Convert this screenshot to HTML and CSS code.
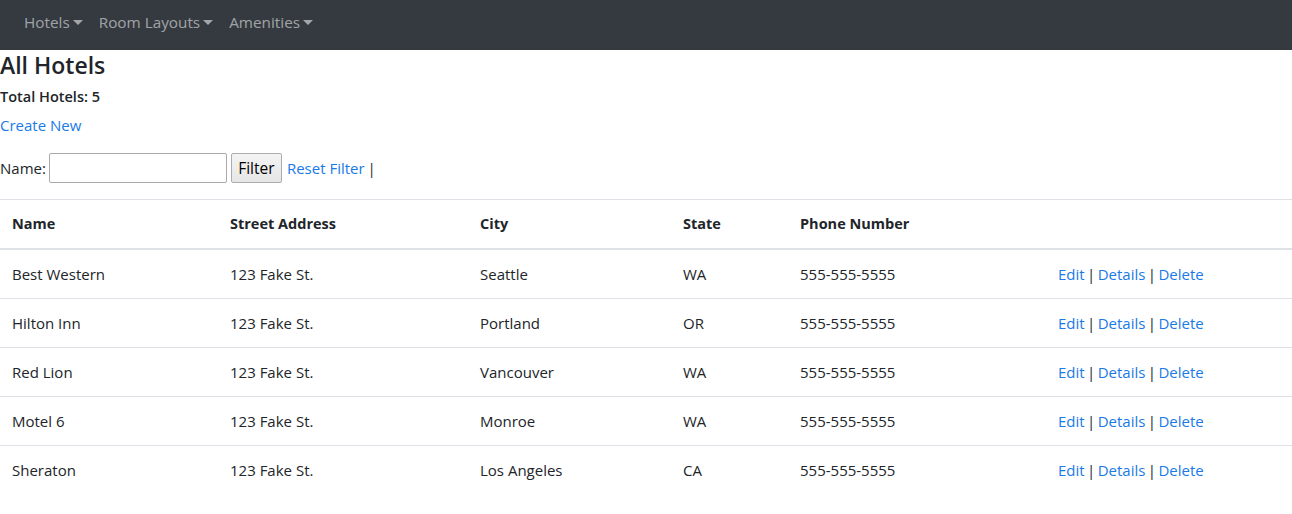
FILE: index.html
```html
<!DOCTYPE html>
<html lang="en">
<head>
<meta charset="utf-8">
<title>All Hotels</title>
<link rel="stylesheet" href="styles.css">
</head>
<body>
<nav class="navbar">
  <ul class="nav">
    <li class="nav-item"><a class="nav-link dropdown-toggle" href="#">Hotels</a></li>
    <li class="nav-item"><a class="nav-link dropdown-toggle" href="#">Room Layouts</a></li>
    <li class="nav-item"><a class="nav-link dropdown-toggle" href="#">Amenities</a></li>
  </ul>
</nav>
<main class="content">
  <h4 class="title">All Hotels</h4>
  <p class="total"><strong>Total Hotels: 5</strong></p>
  <p class="create"><a href="#">Create New</a></p>
  <form class="filter">
    <label class="filter-label">Name:</label>
    <input class="filter-input" type="text">
    <button class="filter-btn" type="button">Filter</button>
    <a href="#" class="reset">Reset Filter</a><span class="sep">|</span>
  </form>
  <table class="table">
    <thead>
      <tr>
        <th class="c-name">Name</th>
        <th class="c-street">Street Address</th>
        <th class="c-city">City</th>
        <th class="c-state">State</th>
        <th class="c-phone">Phone Number</th>
        <th class="c-actions"></th>
      </tr>
    </thead>
    <tbody>
      <tr><td>Best Western</td><td>123 Fake St.</td><td>Seattle</td><td>WA</td><td>555-555-5555</td><td class="actions"><a href="#">Edit</a> | <a href="#">Details</a> | <a href="#">Delete</a></td></tr>
      <tr><td>Hilton Inn</td><td>123 Fake St.</td><td>Portland</td><td>OR</td><td>555-555-5555</td><td class="actions"><a href="#">Edit</a> | <a href="#">Details</a> | <a href="#">Delete</a></td></tr>
      <tr><td>Red Lion</td><td>123 Fake St.</td><td>Vancouver</td><td>WA</td><td>555-555-5555</td><td class="actions"><a href="#">Edit</a> | <a href="#">Details</a> | <a href="#">Delete</a></td></tr>
      <tr><td>Motel 6</td><td>123 Fake St.</td><td>Monroe</td><td>WA</td><td>555-555-5555</td><td class="actions"><a href="#">Edit</a> | <a href="#">Details</a> | <a href="#">Delete</a></td></tr>
      <tr><td>Sheraton</td><td>123 Fake St.</td><td>Los Angeles</td><td>CA</td><td>555-555-5555</td><td class="actions"><a href="#">Edit</a> | <a href="#">Details</a> | <a href="#">Delete</a></td></tr>
    </tbody>
  </table>
</main>
</body>
</html>
```

FILE: styles.css
```css
* { box-sizing: border-box; }
html, body { margin: 0; padding: 0; }
body {
  font-family: "Open Sans", "Noto Sans", "Liberation Sans", sans-serif;
  font-size: 15px;
  line-height: 24px;
  color: #212529;
  background: #fff;
}
a { color: #1a7ae6; text-decoration: none; }

.navbar {
  background: #343a40;
  height: 50px;
  display: flex;
  align-items: center;
  padding: 0 16px 6px;
}
.nav { list-style: none; margin: 0; padding: 0; display: flex; }
.nav-link {
  display: block;
  padding: 0 8px;
  color: rgba(255,255,255,.55);
  font-size: 15.3px;
  line-height: 24px;
}
.dropdown-toggle::after {
  content: "";
  display: inline-block;
  margin-left: 3px;
  vertical-align: 3px;
  border-top: 5px solid;
  border-right: 5px solid transparent;
  border-left: 5px solid transparent;
}

.content { padding: 0; }
.title {
  margin: 0;
  padding-top: 1px;
  font-size: 23px;
  font-weight: 600;
  line-height: 28px;
}
.total { margin: 6px 0 0; font-size: 14.5px; line-height: 24px; }
.total strong { font-weight: 600; }
.create { margin: 4px 0 0; }
.filter {
  display: flex;
  align-items: center;
  margin-top: 16px;
  height: 30px;
}
.filter-label { margin-right: 3px; }
.filter-input {
  width: 178px;
  height: 30px;
  border: 1px solid #a9a9a9;
  border-radius: 2px;
  margin: 0 4px 0 0;
  padding: 1px 2px;
  font: inherit;
}
.filter-btn {
  height: 30px;
  width: 51px;
  padding: 0;
  margin-right: 5px;
  border: 1px solid #adadad;
  border-radius: 2px;
  background: linear-gradient(#f4f4f4, #e6e6e6);
  font: inherit;
  font-size: 15.5px;
  color: #000;
}
.sep { margin-left: 3px; }

.table {
  width: 100%;
  border-collapse: collapse;
  margin-top: 16px;
}
.table th, .table td {
  text-align: left;
  padding: 12px;
  height: 49px;
  border-top: 1px solid #dee2e6;
  vertical-align: middle;
}
.table th { font-weight: 700; font-size: 14.5px; }
.table thead th { border-bottom: 2px solid #dee2e6; height: 49px; }
.actions { word-spacing: -1.5px; }
.c-name { width: 218px; }
.c-street { width: 250px; }
.c-city { width: 203px; }
.c-state { width: 117px; }
.c-phone { width: 258px; }
```
